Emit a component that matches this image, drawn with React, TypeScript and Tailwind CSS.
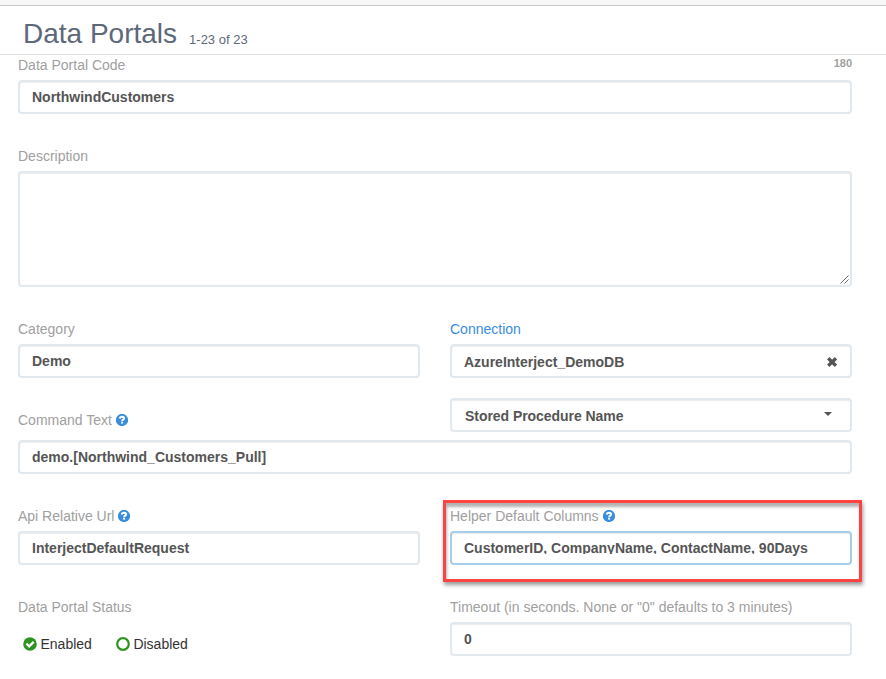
import type { ReactNode } from "react";

const boxBase =
  "w-full h-[34px] rounded-[4px] border-2 px-3 flex items-center text-[14px] font-bold text-[#555] bg-white whitespace-nowrap shadow-[inset_0_1px_1px_rgba(0,0,0,0.075)]";

function Box({ children, focused = false }: { children?: ReactNode; focused?: boolean }) {
  return (
    <div className={`${boxBase} ${focused ? "border-[#a6cde9]" : "border-[#e1e8ee]"}`}>{children}</div>
  );
}

function HelpIcon() {
  return (
    <svg className="ml-1 size-3" viewBox="0 0 12 12" fill="none">
      <circle cx="6" cy="6" r="6.1" fill="#3a8dde" />
      <path d="M3.7 4.5C3.9 3.3 4.8 2.8 6 2.8c1.3 0 2.1.6 2.1 1.6 0 1.2-1.9 1.2-1.9 2.6" stroke="#fff" strokeWidth="2" />
      <path d="M5.1 7.7h2v1.9h-2z" fill="#fff" />
    </svg>
  );
}

function Label({ children, help = false }: { children: ReactNode; help?: boolean }) {
  return (
    <div className="mb-[5px] flex h-5 items-center whitespace-nowrap text-[14px] leading-5 text-[#a0a0a0]">
      <span>{children}</span>
      {help && <HelpIcon />}
    </div>
  );
}

export default function App() {
  return (
    <div className="h-[679px] w-[886px] overflow-hidden bg-white font-['Liberation_Sans',Arial,sans-serif]">
      <div className="h-1.5 border-b border-[#c8c8c8] bg-[#f7f7f7]" />
      <header className="flex h-[49px] items-baseline border-b border-[#e2e2e2] pl-[23px] pt-2 text-[#5d6879]">
        <h1 className="text-[28px] leading-[40px]">Data Portals</h1>
        <span className="relative top-px ml-3 text-[13px]">1-23 of 23</span>
      </header>

      <main className="w-[852px] pl-[18px]">
        <section className="h-[91px]">
          <div className="flex justify-between">
            <Label>Data Portal Code</Label>
            <span className="text-[11px] font-bold leading-4 text-[#a0a0a0]">180</span>
          </div>
          <Box>NorthwindCustomers</Box>
        </section>

        <section className="h-[173px]">
          <Label>Description</Label>
          <div className="flex h-[116px] items-end justify-end rounded-[4px] border-2 border-[#e1e8ee] shadow-[inset_0_1px_1px_rgba(0,0,0,0.075)]">
            <svg className="mr-px mb-px size-[9px]" viewBox="0 0 9 9" stroke="#555" strokeWidth="0.9">
              <path d="M0.5 8.5 8.5 0.5M4.5 8.5 8.5 4.5" />
            </svg>
          </div>
        </section>

        <section className="grid h-[121px] grid-cols-2 gap-x-[30px]">
          <div>
            <Label>Category</Label>
            <Box>Demo</Box>
            <div className="pt-8">
              <Label help>Command Text</Label>
            </div>
          </div>
          <div>
            <div className="mb-[5px] h-5 text-[14px] leading-5 text-[#3a8dde]">Connection</div>
            <Box>
              <span className="pt-0.5">AzureInterject_DemoDB</span>
              <svg className="mt-px ml-auto size-3" viewBox="0 0 12 12" stroke="#555" strokeWidth="3.3">
                <path d="M2.2 2.2 10 9.8M10 2.2 2.2 9.8" />
              </svg>
            </Box>
            <div className="mt-5">
              <Box>
                <span className="pl-px pt-0.5 tracking-[-0.05px]">Stored Procedure Name</span>
                <span className="mr-[6px] mb-[3px] ml-auto border-x-4 border-t-4 border-x-transparent border-t-[#555]" />
              </Box>
            </div>
          </div>
        </section>

        <section className="h-[66px]">
          <Box>demo.[Northwind_Customers_Pull]</Box>
        </section>

        <section className="grid h-[91px] grid-cols-2 gap-x-[30px]">
          <div>
            <Label help>Api Relative Url</Label>
            <Box>InterjectDefaultRequest</Box>
          </div>
          <div className="relative">
            <Label help>Helper Default Columns</Label>
            <Box focused>
              <span className="leading-5 whitespace-pre [clip-path:inset(0_0_4px_0)]">CustomerID, CompanyName, ContactName, </span>
              <span className="leading-5">90Days</span>
            </Box>
            <div className="pointer-events-none absolute -left-[7px] -top-[6px] h-[82px] w-[419px] border-3 border-[#ff4343] shadow-[1px_3px_4px_rgba(0,0,0,0.4),inset_1px_4px_3px_rgba(0,0,0,0.3)]" />
          </div>
        </section>

        <section className="grid grid-cols-2 gap-x-[30px]">
          <div>
            <Label>Data Portal Status</Label>
            <div className="flex items-center pt-[12px] pl-[5px] text-[14px] leading-5 text-[#333]">
              <svg className="mb-px size-[14px]" viewBox="0 0 14 14" fill="none">
                <circle cx="7" cy="7" r="6.8" fill="#2f9322" />
                <path d="M3.4 6.7 6.2 9.4 10.7 4.9" stroke="#fff" strokeWidth="2.3" />
              </svg>
              <span className="ml-[3.5px]">Enabled</span>
              <svg className="mb-px ml-6 size-[14px]" viewBox="0 0 14 14" fill="none">
                <circle cx="7" cy="7" r="5.8" stroke="#2f9322" strokeWidth="2.2" />
              </svg>
              <span className="ml-[3.5px]">Disabled</span>
            </div>
          </div>
          <div>
            <Label>Timeout (in seconds. None or "0" defaults to 3 minutes)</Label>
            <Box>0</Box>
          </div>
        </section>
      </main>
    </div>
  );
}
